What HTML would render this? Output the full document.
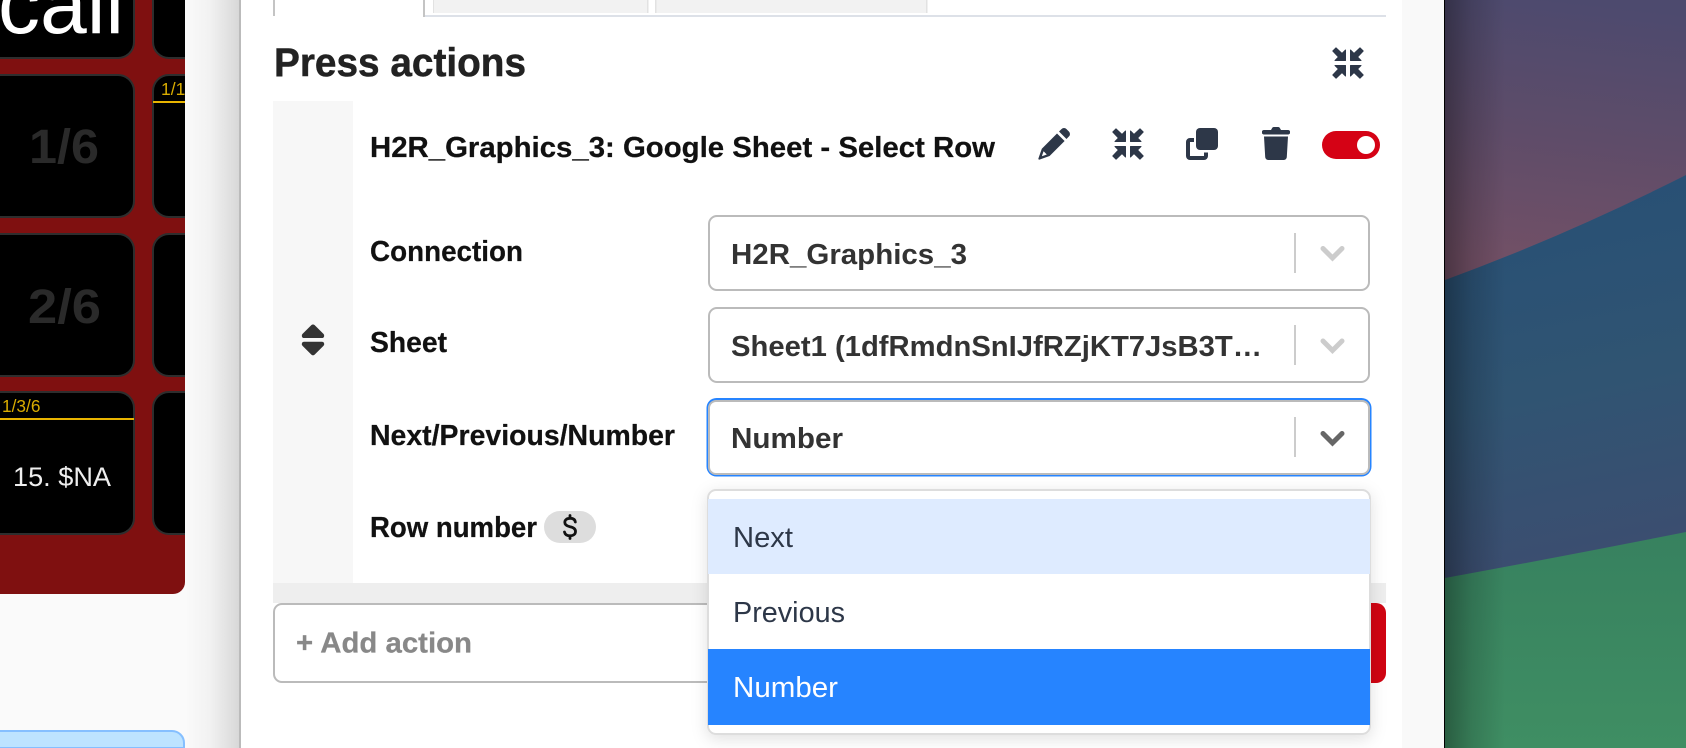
<!DOCTYPE html>
<html lang="en">
<head>
<meta charset="utf-8">
<title>Press actions</title>
<style>
html,body{margin:0;padding:0;width:1686px;height:748px;overflow:hidden;background:#fafafa}
svg{display:block;position:absolute;left:0;top:0}
text{font-family:"Liberation Sans",Arial,sans-serif;white-space:pre}
.b{font-weight:700}
</style>
</head>
<body>
<svg width="1686" height="748" viewBox="0 0 1686 748" xmlns="http://www.w3.org/2000/svg">
<defs>
<linearGradient id="sh" x1="0" x2="1" y1="0" y2="0"><stop offset="0" stop-color="#fafafa"/><stop offset=".45" stop-color="#f2f2f2"/><stop offset="1" stop-color="#d8d8d8"/></linearGradient>
<linearGradient id="wpTop" gradientUnits="userSpaceOnUse" x1="1560" y1="0" x2="1530" y2="265"><stop offset="0" stop-color="#4d4a6e"/><stop offset=".5" stop-color="#5e4c69"/><stop offset="1" stop-color="#725066"/></linearGradient>
<linearGradient id="wpBlue" gradientUnits="userSpaceOnUse" x1="1560" y1="190" x2="1640" y2="570"><stop offset="0" stop-color="#285075"/><stop offset=".5" stop-color="#305472"/><stop offset="1" stop-color="#3d4d70"/></linearGradient>
<linearGradient id="wpGreen" gradientUnits="userSpaceOnUse" x1="1560" y1="530" x2="1560" y2="748"><stop offset="0" stop-color="#37815f"/><stop offset="1" stop-color="#3f8e63"/></linearGradient>
<linearGradient id="wpShade" x1="0" x2="1" y1="0" y2="0"><stop offset="0" stop-color="#000" stop-opacity=".34"/><stop offset=".45" stop-color="#000" stop-opacity=".14"/><stop offset="1" stop-color="#000" stop-opacity="0"/></linearGradient>
<filter id="dd" x="-10%" y="-15%" width="120%" height="130%"><feDropShadow dx="0" dy="4" stdDeviation="8" flood-color="#000" flood-opacity=".12"/></filter>
<g id="q"><path d="M13.500 13.500H3L6.500 10 .8 4 4 .8 10 6.500 13.500 3Z" stroke="#2d3748" stroke-width="1" stroke-linejoin="round"/></g>
<g id="cmp" fill="#2d3748">
  <use href="#q"/>
  <use href="#q" transform="matrix(-1 0 0 1 32 0)"/>
  <use href="#q" transform="matrix(1 0 0 -1 0 32)"/>
  <use href="#q" transform="matrix(-1 0 0 -1 32 32)"/>
</g>
<clipPath id="leftClip"><rect x="0" y="0" width="185" height="748"/></clipPath>
</defs>

<!-- page background -->
<rect width="1686" height="748" fill="#fafafa"/>

<!-- left panel -->
<g clip-path="url(#leftClip)">
  <path d="M-20-20H185V582a12 12 0 0 1-12 12H-20Z" fill="#7f1010"/>
  <g fill="#000" stroke="#2e2e2e" stroke-width="2">
    <rect x="-30" y="-100" width="164" height="158" rx="16"/>
    <rect x="153" y="-100" width="164" height="158" rx="16"/>
    <rect x="-30" y="75" width="164" height="142" rx="16"/>
    <rect x="153" y="75" width="164" height="142" rx="16"/>
    <rect x="-30" y="234" width="164" height="142" rx="16"/>
    <rect x="153" y="234" width="164" height="142" rx="16"/>
    <rect x="-30" y="392" width="164" height="142" rx="16"/>
    <rect x="153" y="392" width="164" height="142" rx="16"/>
  </g>
  <text x="-2" y="33" font-size="84" fill="#fff">call</text>
  <text x="29" y="163" class="b" font-size="48" fill="#2a2a2a" textLength="70" lengthAdjust="spacingAndGlyphs">1/6</text>
  <text x="28" y="323" class="b" font-size="48" fill="#2a2a2a" textLength="73" lengthAdjust="spacingAndGlyphs">2/6</text>
  <text x="161" y="95" font-size="17.500" fill="#d9ac00">1/1</text>
  <rect x="153" y="101" width="40" height="2" fill="#e8b400"/>
  <text x="2" y="412" font-size="17.500" fill="#d9ac00" textLength="38.500" lengthAdjust="spacingAndGlyphs">1/3/6</text>
  <rect x="0" y="418" width="134" height="2" fill="#e8b400"/>
  <text x="13" y="486" font-size="27" fill="#eee" textLength="98" lengthAdjust="spacingAndGlyphs">15. $NA</text>
</g>
<path d="M-10 748V731H172a12 12 0 0 1 12 12V748Z" fill="#bde3ff" stroke="#85bfff" stroke-width="2"/>

<!-- modal backdrop shadow -->
<rect x="185" y="0" width="54" height="748" fill="url(#sh)"/>
<rect x="239" y="0" width="2" height="748" fill="#bbb"/>
<rect x="241" y="0" width="1161" height="748" fill="#fff"/>
<rect x="1402" y="0" width="42" height="748" fill="#f9f9f9"/>
<rect x="1444" y="0" width="1" height="748" fill="#000"/>

<!-- wallpaper -->
<rect x="1445" y="0" width="241" height="300" fill="url(#wpTop)"/>
<path d="M1445 280Q1565 236 1686 175V600H1445Z" fill="url(#wpBlue)"/>
<path d="M1445 578Q1565 556 1686 532V748H1445Z" fill="url(#wpGreen)"/>
<rect x="1445" y="0" width="60" height="748" fill="url(#wpShade)"/>

<!-- tabs -->
<rect x="425" y="15" width="961" height="2" fill="#dde1e8"/>
<rect x="273" y="0" width="2" height="16" fill="#c4c4c4"/>
<rect x="423" y="0" width="2" height="17" fill="#c4c4c4"/>
<rect x="433" y="0" width="214" height="13" fill="#f2f2f2"/>
<rect x="433" y="0" width="1" height="13" fill="#e2e2e2"/>
<rect x="647" y="0" width="1.500" height="13" fill="#e2e2e2"/>
<rect x="655" y="0" width="272" height="13" fill="#f2f2f2"/>
<rect x="655" y="0" width="1.500" height="13" fill="#e2e2e2"/>
<rect x="926" y="0" width="1.500" height="13" fill="#e2e2e2"/>

<!-- heading -->
<text x="274" y="76" class="b" font-size="40" fill="#222" stroke="#222" stroke-width=".5" textLength="252" lengthAdjust="spacingAndGlyphs">Press actions</text>
<use href="#cmp" x="1332" y="47"/>

<!-- action block -->
<rect x="273" y="101" width="80" height="482" fill="#f7f7f7"/>
<rect x="273" y="583" width="1113" height="20" fill="#eee"/>
<svg x="301" y="320.700" width="24" height="38.400" viewBox="0 0 320 512" fill="#333" stroke="#333" stroke-width="14" overflow="visible"><path d="M41 288h238c21.400 0 32.100 25.900 17 41L177 448c-9.400 9.400-24.600 9.400-33.900 0L24 329c-15.100-15.100-4.400-41 17-41zm255-105L177 64c-9.400-9.400-24.600-9.400-33.900 0L24 183c-15.100 15.100-4.400 41 17 41h238c21.400 0 32.100-25.900 17-41z"/></svg>

<text x="370" y="157" class="b" font-size="28.500" fill="#111" stroke="#111" stroke-width=".25" textLength="625" lengthAdjust="spacingAndGlyphs">H2R_Graphics_3: Google Sheet - Select Row</text>

<!-- pencil -->
<svg x="1038" y="128" width="32" height="32" viewBox="0 0 32 32" fill="#2d3748"><path d="M21 3.500 23.600 1a3.400 3.400 0 0 1 4.800 0l2.600 2.600a3.400 3.400 0 0 1 0 4.800L28.500 11ZM19 5.500 26.600 13 11.600 28 1.500 31.600a.9.9 0 0 1-1.100-1.100L3.800 20.800Z"/><path d="M4.400 26.500 5.600 23.300 8.800 26.500 3.900 28.200Z" fill="#fff"/></svg>
<!-- compress -->
<use href="#cmp" x="1112" y="128"/>
<!-- copy -->
<svg x="1186" y="128" width="32" height="32" viewBox="0 0 32 32" fill="#2d3748"><rect x="10" y="0" width="22" height="22" rx="4"/><path d="M8 10H4a4 4 0 0 0-4 4V28a4 4 0 0 0 4 4H18a4 4 0 0 0 4-4V24.500H18V28H4V14H8Z"/></svg>
<!-- trash -->
<svg x="1262" y="127" width="28" height="33" viewBox="0 0 28 33" fill="#2d3748"><path d="M9 3 10.300.8A1.600 1.600 0 0 1 11.700 0H16.300A1.600 1.600 0 0 1 17.700.8L19 3H26a2 2 0 0 1 0 4.500H2A2 2 0 0 1 2 3Z"/><path d="M2 9.500H26L24.800 30a3 3 0 0 1-3 3H6.200a3 3 0 0 1-3-3Z"/></svg>
<!-- toggle -->
<rect x="1322" y="131" width="58" height="28" rx="14" fill="#d50215"/>
<circle cx="1366" cy="145" r="9" fill="#fff"/>

<!-- labels -->
<text x="370" y="261" class="b" font-size="28.500" fill="#111" stroke="#111" stroke-width=".25" textLength="153" lengthAdjust="spacingAndGlyphs">Connection</text>
<text x="370" y="352" class="b" font-size="28.500" fill="#111" stroke="#111" stroke-width=".25" textLength="77" lengthAdjust="spacingAndGlyphs">Sheet</text>
<text x="370" y="445" class="b" font-size="28.500" fill="#111" stroke="#111" stroke-width=".25" textLength="305" lengthAdjust="spacingAndGlyphs">Next/Previous/Number</text>
<text x="370" y="537" class="b" font-size="28.500" fill="#111" stroke="#111" stroke-width=".25" textLength="167" lengthAdjust="spacingAndGlyphs">Row number</text>
<rect x="544" y="511" width="52" height="32" rx="16" fill="#ddd"/>
<svg x="562.500" y="513.500" width="15" height="27" viewBox="0 0 15 27" fill="none" stroke="#111" stroke-width="2.800" stroke-linecap="round"><path d="M12.800 8.500C12.500 6 10.500 4.800 7.500 4.800C4.300 4.800 2.300 6.500 2.300 8.800C2.300 11.500 4.500 12.600 7.500 13.300C11 14 13 15.200 13 18C13 20.500 11 22.300 7.500 22.300C4.500 22.300 2.500 21 2 18.500M7.500 2V4.800M7.500 22.300V25"/></svg>

<!-- selects -->
<rect x="709" y="216" width="660" height="74" rx="8" fill="#fff" stroke="#bbb" stroke-width="2"/>
<text x="731" y="264" class="b" font-size="29" fill="#333" textLength="236" lengthAdjust="spacingAndGlyphs">H2R_Graphics_3</text>
<rect x="1294" y="233" width="2" height="40" fill="#ccc"/>
<path d="M1323 248.500 1332.500 258 1342 248.500" fill="none" stroke="#ccc" stroke-width="5" stroke-linecap="round"/>

<rect x="709" y="308" width="660" height="74" rx="8" fill="#fff" stroke="#bbb" stroke-width="2"/>
<text x="731" y="356" class="b" font-size="29" fill="#333" textLength="531" lengthAdjust="spacingAndGlyphs">Sheet1 (1dfRmdnSnIJfRZjKT7JsB3T…</text>
<rect x="1294" y="325" width="2" height="40" fill="#ccc"/>
<path d="M1323 341 1332.500 350.500 1342 341" fill="none" stroke="#ccc" stroke-width="5" stroke-linecap="round"/>

<rect x="706.500" y="398" width="665" height="78.500" rx="10" fill="#2684ff"/>
<rect x="709" y="401" width="660" height="73" rx="7" fill="#fff" stroke="#bbb" stroke-width="2"/>
<text x="731" y="448" class="b" font-size="29" fill="#333" textLength="112" lengthAdjust="spacingAndGlyphs">Number</text>
<rect x="1294" y="417" width="2" height="40" fill="#ccc"/>
<path d="M1323 433.500 1332.500 443 1342 433.500" fill="none" stroke="#666" stroke-width="5" stroke-linecap="round"/>

<!-- add action -->
<rect x="1290" y="603" width="96" height="80" rx="10" fill="#d00412"/>
<rect x="274" y="604" width="1040" height="78" rx="8" fill="#fff" stroke="#bbb" stroke-width="2"/>
<text x="296" y="652.500" class="b" font-size="29" fill="#888" stroke="#888" stroke-width=".25" textLength="176" lengthAdjust="spacingAndGlyphs">+ Add action</text>

<!-- dropdown -->
<g>
  <rect x="708" y="490" width="662" height="244" rx="8" fill="#fff" stroke="#ddd" stroke-width="2" filter="url(#dd)"/>
  <rect x="708" y="499" width="662" height="75" fill="#deebff"/>
  <rect x="708" y="649" width="662" height="76" fill="#2684ff"/>
  <text x="733" y="547" font-size="28.500" fill="#2d3748" textLength="60" lengthAdjust="spacingAndGlyphs">Next</text>
  <text x="733" y="622" font-size="28.500" fill="#2d3748" textLength="112" lengthAdjust="spacingAndGlyphs">Previous</text>
  <text x="733" y="697" font-size="28.500" fill="#fff" textLength="105" lengthAdjust="spacingAndGlyphs">Number</text>
</g>
</svg>
</body>
</html>
